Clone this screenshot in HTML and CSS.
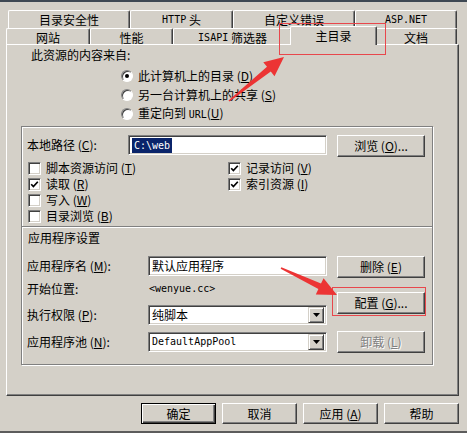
FILE: index.html
```html
<!DOCTYPE html>
<html lang="zh-CN">
<head>
<meta charset="utf-8">
<title>主目录</title>
<link rel="stylesheet" href="styles.css">
</head>
<body>
<div class="window">
  <div class="tabrow back">
    <div class="tab w122">目录安全性</div>
    <div class="tab w103"><span class="lat">HTTP</span>&nbsp;头</div>
    <div class="tab w122">自定义错误</div>
    <div class="tab w102"><span class="lat">ASP.NET</span></div>
  </div>
  <div class="tabrow front">
    <div class="tab w84">网站</div>
    <div class="tab w83">性能</div>
    <div class="tab w119"><span class="lat">ISAPI</span>&nbsp;筛选器</div>
    <div class="tab sel w87">主目录</div>
    <div class="tab w82">文档</div>
  </div>
  <div class="panel">
    <div class="src-label">此资源的内容来自:</div>
    <div class="radios">
      <div class="radio-row"><span class="radio on"></span><span>此计算机上的目录 (<u>D</u>)</span></div>
      <div class="radio-row"><span class="radio"></span><span>另一台计算机上的共享 (<u>S</u>)</span></div>
      <div class="radio-row"><span class="radio"></span><span>重定向到 <span class="lat">URL</span>(<u>U</u>)</span></div>
    </div>
    <div class="group">
      <div class="path-row">
        <div class="lbl lbl-path">本地路径 (<u>C</u>):</div>
        <div class="field w199"><span class="hl lat">C:\web</span></div>
        <div class="btn">浏览 (<u>O</u>)...</div>
      </div>
      <div class="checks">
        <div class="chk-row"><span class="chk"></span><span>脚本资源访问 (<u>T</u>)</span></div>
        <div class="chk-row"><span class="chk on"><svg width="9" height="9" viewBox="0 0 9 9"><polyline points="1.2,4.2 3.4,6.6 7.8,1.8" fill="none" stroke="#000" stroke-width="1.7"/></svg></span><span>记录访问 (<u>V</u>)</span></div>
        <div class="chk-row"><span class="chk on"><svg width="9" height="9" viewBox="0 0 9 9"><polyline points="1.2,4.2 3.4,6.6 7.8,1.8" fill="none" stroke="#000" stroke-width="1.7"/></svg></span><span>读取 (<u>R</u>)</span></div>
        <div class="chk-row"><span class="chk on"><svg width="9" height="9" viewBox="0 0 9 9"><polyline points="1.2,4.2 3.4,6.6 7.8,1.8" fill="none" stroke="#000" stroke-width="1.7"/></svg></span><span>索引资源 (<u>I</u>)</span></div>
        <div class="chk-row"><span class="chk"></span><span>写入 (<u>W</u>)</span></div>
        <div class="chk-row"></div>
        <div class="chk-row"><span class="chk"></span><span>目录浏览 (<u>B</u>)</span></div>
      </div>
      <div class="sep"></div>
      <div class="app-head">应用程序设置</div>
      <div class="app">
        <div class="app-left">
          <div class="app-row r-name"><div class="lbl lbl-app">应用程序名 (<u>M</u>):</div><div class="field w179">默认应用程序</div></div>
          <div class="app-row r-start"><div class="lbl lbl-app">开始位置:</div><div class="start-val lat">&lt;wenyue.cc&gt;</div></div>
          <div class="app-row r-exec"><div class="lbl lbl-app">执行权限 (<u>P</u>):</div><div class="field w179 select"><span>纯脚本</span><span class="drop"><svg width="7" height="4" viewBox="0 0 7 4"><polygon points="0,0 7,0 3.5,4" fill="#000"/></svg></span></div></div>
          <div class="app-row r-pool"><div class="lbl lbl-app">应用程序池 (<u>N</u>):</div><div class="field w179 select"><span class="lat">DefaultAppPool</span><span class="drop"><svg width="7" height="4" viewBox="0 0 7 4"><polygon points="0,0 7,0 3.5,4" fill="#000"/></svg></span></div></div>
        </div>
        <div class="app-right">
          <div class="btn b-del">删除 (<u>E</u>)</div>
          <div class="btn b-cfg">配置 (<u>G</u>)...</div>
          <div class="btn b-unl disabled">卸载 (<u>L</u>)</div>
        </div>
      </div>
    </div>
  </div>
  <div class="footer">
    <div class="btn fbtn def">确定</div>
    <div class="btn fbtn">取消</div>
    <div class="btn fbtn">应用 (<u>A</u>)</div>
    <div class="btn fbtn">帮助</div>
  </div>
</div>
<svg class="annot" width="467" height="433" viewBox="0 0 467 433">
  <rect x="279.5" y="23.5" width="106" height="31" fill="none" stroke="#e8474c" stroke-width="1"/>
  <rect x="332.5" y="287.5" width="93" height="28" fill="none" stroke="#e8474c" stroke-width="1"/>
  <polygon points="229.5,101.6 270.8,71.55 274.5,76.2 284,57 263.3,62.2 267.0,66.85 228.5,100.4" fill="#ec3434"/>
  <polygon points="280.66,268.72 318.4,289.0 315.8,294.4 337,295 323.6,278.2 321.0,283.6 281.34,267.28" fill="#ec3434"/>
</svg>
</body>
</html>
```

FILE: styles.css
```css
* { box-sizing: border-box; }
html, body { margin: 0; padding: 0; }
body {
  position: relative;
  width: 467px;
  height: 433px;
  overflow: hidden;
  background: #d4d0c8;
  color: #000;
  font: 12px/14px "Noto Sans CJK SC", "Noto Sans CJK JP", sans-serif;
}
u { text-decoration: underline; text-underline-offset: 1px; }
.lat { font-family: "DejaVu Sans Mono", "Liberation Mono", monospace; font-size: 10px; }

.window {
  height: 433px;
  border-top: 2px solid #3e4853;
  border-bottom: 2px solid #5c5c5c;
  padding-top: 8px;
}

/* tabs */
.tabrow { display: flex; }
.tabrow.back { margin-left: 8px; height: 18px; }
.tabrow.front { margin-left: 6px; height: 16px; position: relative; z-index: 2; }
.tab {
  flex: none;
  display: flex;
  justify-content: center;
  align-items: center;
  background: #d4d0c8;
  border-top: 1px solid #fff;
  border-left: 1px solid #fff;
  border-right: 1px solid #404040;
  box-shadow: inset -1px 0 #808080;
  border-radius: 2px 2px 0 0;
  white-space: nowrap;
}
.back .tab { height: 18px; padding-top: 1px; }
.front .tab { height: 16px; padding-top: 3px; }
.front .tab.sel { height: 19px; margin: -2px -2px 0 -2px; padding-top: 0; position: relative; z-index: 3; }
.w122 { width: 122px; }
.w103 { width: 103px; }
.w102 { width: 102px; }
.w84 { width: 84px; }
.w83 { width: 83px; }
.w119 { width: 119px; }
.w87 { width: 87px; }
.w82 { width: 82px; }

/* panel */
.panel {
  position: relative;
  z-index: 1;
  margin-left: 6px;
  width: 453px;
  height: 352px;
  border: 1px solid;
  border-color: #fff #404040 #404040 #fff;
  box-shadow: inset -1px -1px #808080;
}
.src-label { margin: 3px 0 0 24px; height: 14px; }
.radios { margin: 4px 0 0 114px; }
.radio-row { display: flex; align-items: center; height: 19px; gap: 5px; }
.radio {
  position: relative;
  width: 12px;
  height: 12px;
  border-radius: 50%;
  background: #fff;
  border: 1px solid;
  border-color: #808080 #fff #fff #808080;
  box-shadow: inset 1px 1px #404040;
}
.radio.on::after {
  content: "";
  position: absolute;
  left: 3px;
  top: 3px;
  width: 4px;
  height: 4px;
  border-radius: 50%;
  background: #000;
}

/* group box */
.group {
  margin: 3px 0 0 14px;
  width: 412px;
  height: 239px;
  border: 1px solid #808080;
  box-shadow: inset 1px 1px #fff, 1px 1px #fff;
}
.path-row { display: flex; align-items: flex-start; margin-top: 8px; padding-left: 5px; height: 22px; }
.lbl { height: 20px; line-height: 20px; flex: none; white-space: nowrap; }
.lbl-path { width: 101px; }
.lbl-app { width: 121px; }
.field {
  flex: none;
  height: 20px;
  display: flex;
  align-items: center;
  padding-left: 3px;
  background: #fff;
  border: 1px solid;
  border-color: #808080 #fff #fff #808080;
  box-shadow: inset 1px 1px #404040, inset -1px -1px #d4d0c8;
  white-space: nowrap;
}
.w199 { width: 199px; }
.w179 { width: 179px; }
.hl { background: #0a246a; color: #fff; height: 15px; line-height: 15px; padding: 0 2px; }
.path-row .btn { margin-left: 10px; }

.checks {
  display: grid;
  grid-template-columns: 200px 1fr;
  grid-auto-rows: 16px;
  margin-top: 3px;
  padding-left: 6px;
}
.chk-row { display: flex; align-items: center; gap: 5px; white-space: nowrap; }
.chk {
  flex: none;
  width: 13px;
  height: 13px;
  display: flex;
  align-items: center;
  justify-content: center;
  background: #fff;
  border: 1px solid;
  border-color: #808080 #fff #fff #808080;
  box-shadow: inset 1px 1px #404040, inset -1px -1px #d4d0c8;
}
.sep { margin-top: 2px; height: 2px; border-top: 1px solid #808080; border-bottom: 1px solid #fff; }
.app-head { margin-top: 3px; padding-left: 6px; height: 14px; }

.app { display: flex; margin-top: 11px; padding-left: 5px; }
.app-left { display: flex; flex-direction: column; }
.app-row { display: flex; align-items: center; }
.r-name { height: 20px; }
.r-start { height: 14px; margin-top: 6px; }
.r-start .lbl { height: 14px; line-height: 14px; }
.r-exec { height: 20px; margin-top: 9px; }
.r-pool { height: 20px; margin-top: 7px; }
.start-val { padding-left: 1px; }
.select { padding-right: 2px; }
.drop {
  margin-left: auto;
  width: 16px;
  height: 16px;
  display: flex;
  align-items: center;
  justify-content: center;
  background: #d4d0c8;
  border: 1px solid;
  border-color: #d4d0c8 #404040 #404040 #d4d0c8;
  box-shadow: inset 1px 1px #fff, inset -1px -1px #808080;
}
.app-right { display: flex; flex-direction: column; margin-left: 10px; }
.b-cfg { margin-top: 14px; }
.b-unl { margin-top: 17px; }

/* buttons */
.btn {
  flex: none;
  width: 88px;
  height: 22px;
  display: flex;
  align-items: center;
  justify-content: center;
  background: #d4d0c8;
  border: 1px solid;
  border-color: #fff #404040 #404040 #fff;
  box-shadow: inset -1px -1px #808080;
  white-space: nowrap;
}
.btn.disabled { color: #808080; text-shadow: 1px 1px #fff; }
.footer { display: flex; justify-content: flex-end; gap: 6px; margin-top: 7px; padding-right: 8px; }
.fbtn { width: 75px; height: 21px; }
.fbtn.def {
  border: 1px solid #000;
  box-shadow: inset 1px 1px #fff, inset -1px -1px #404040, inset -2px -2px #808080;
}

.annot { position: absolute; left: 0; top: 0; z-index: 10; pointer-events: none; }
```
